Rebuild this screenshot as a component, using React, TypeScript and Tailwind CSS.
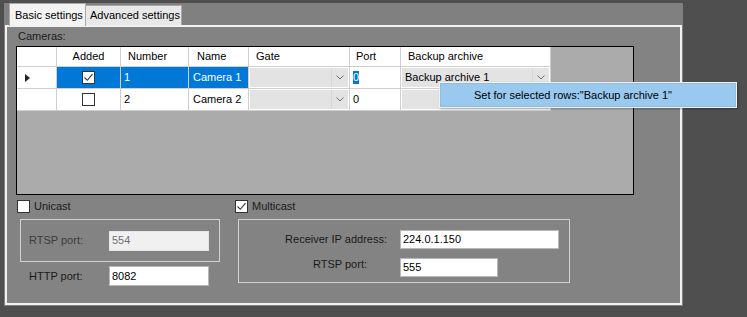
import React from "react";

const font = "font-['Liberation_Sans',Arial,sans-serif]";

function CheckBox({ checked }: { checked?: boolean }) {
    return (
        <div className="w-[13px] h-[13px] bg-white border border-[#333] flex items-center justify-center shrink-0">
            {checked && (
                <svg width="11" height="11" viewBox="0 0 11 11">
                    <path d="M1.5 5.5 L4.3 8.3 L9.5 2.2" stroke="#333" strokeWidth="1.1" fill="none" />
                </svg>
            )}
        </div>
    );
}

function Chevron() {
    return (
        <svg width="8" height="5" viewBox="0 0 8 5">
            <path d="M0.5 0.5 L4 4 L7.5 0.5" stroke="#707070" strokeWidth="1" fill="none" />
        </svg>
    );
}

function Combo({ text }: { text?: string }) {
    return (
        <div className="flex h-full w-full bg-[#e3e3e3]">
            <div className="flex-1 pl-[3px] flex items-center text-black">{text}</div>
            <div className="w-[17px] border-l border-[#d6d6d6] flex items-center justify-center">
                <Chevron />
            </div>
        </div>
    );
}

function TextBox({ value, w, h = 20, disabled }: { value: string; w: number; h?: number; disabled?: boolean }) {
    return (
        <div
            className={
                "border pl-[2px] flex items-center " +
                (disabled ? "bg-[#f0f0f0] text-[#707070] border-[#e6e6e6]" : "bg-white text-black border-[#b8b8b8]")
            }
            style={{ width: w, height: h }}
        >
            {value}
        </div>
    );
}

const cols = [40, 64, 68, 60, 101, 51, 150];
const cell = "border-r border-b border-[#cfcfcf] h-full flex items-center";

export default function App() {
    return (
        <div className={`w-[747px] h-[317px] bg-[#4f4f4f] relative overflow-hidden text-[11px] leading-[13px] ${font}`}>
            <div className="ml-[4px] mt-[3px] w-[679px] h-[303px] bg-[#808080] flex flex-col">
                {/* tabs */}
                <div className="h-[22px] flex items-end pl-[5px] shrink-0">
                    <div className="w-[77px] h-[23px] -mb-[1px] relative z-10 bg-[#f3f3f3] border border-b-0 border-[#a9a9a9] pl-[5px] flex items-center text-black">
                        Basic settings
                    </div>
                    <div className="w-[96px] h-[20px] bg-[#e8e8e8] border border-b-0 border-l-0 border-[#a9a9a9] pl-[4px] flex items-center text-black">
                        Advanced settings
                    </div>
                </div>

                {/* panel */}
                <div className="ml-[1px] w-[677px] h-[280px] border-2 border-[#f2f2f2] bg-[#838383] flex flex-col">
                    <div className="pl-[11px] pt-[3px] text-[#1a1a1a]">Cameras:</div>

                    {/* grid */}
                    <div className="ml-[9px] mt-[3px] w-[618px] h-[149px] border border-black bg-[#ababab] flex flex-col">
                        <div className="flex h-[20px] bg-white w-[534px] text-black">
                            <div className={cell} style={{ width: cols[0] }} />
                            <div className={cell + " justify-center"} style={{ width: cols[1] }}>Added</div>
                            <div className={cell + " pl-[7px]"} style={{ width: cols[2] }}>Number</div>
                            <div className={cell + " pl-[8px]"} style={{ width: cols[3] }}>Name</div>
                            <div className={cell + " pl-[7px]"} style={{ width: cols[4] }}>Gate</div>
                            <div className={cell + " pl-[6px]"} style={{ width: cols[5] }}>Port</div>
                            <div className={cell + " pl-[7px]"} style={{ width: cols[6] }}>Backup archive</div>
                        </div>

                        {/* row 1 */}
                        <div className="flex h-[22px] bg-white w-[534px]">
                            <div className={cell + " pl-[8px]"} style={{ width: cols[0] }}>
                                <svg width="5" height="8" viewBox="0 0 5 8">
                                    <path d="M0 0 L5 4 L0 8 Z" fill="#222" />
                                </svg>
                            </div>
                            <div className={cell + " justify-center bg-[#0078d7]"} style={{ width: cols[1] }}>
                                <CheckBox checked />
                            </div>
                            <div className={cell + " pl-[3px] bg-[#0078d7] text-white"} style={{ width: cols[2] }}>1</div>
                            <div className={cell + " pl-[4px] bg-[#0078d7] text-white"} style={{ width: cols[3] }}>Camera 1</div>
                            <div className={cell + " p-[1px]"} style={{ width: cols[4] }}>
                                <Combo />
                            </div>
                            <div className={cell + " pl-[3px]"} style={{ width: cols[5] }}>
                                <span className="bg-[#0078d7] text-white">0</span>
                            </div>
                            <div className={cell + " p-[1px]"} style={{ width: cols[6] }}>
                                <Combo text="Backup archive 1" />
                            </div>
                        </div>

                        {/* row 2 */}
                        <div className="flex h-[22px] bg-white w-[534px] text-black">
                            <div className={cell} style={{ width: cols[0] }} />
                            <div className={cell + " justify-center"} style={{ width: cols[1] }}>
                                <CheckBox />
                            </div>
                            <div className={cell + " pl-[3px]"} style={{ width: cols[2] }}>2</div>
                            <div className={cell + " pl-[4px]"} style={{ width: cols[3] }}>Camera 2</div>
                            <div className={cell + " p-[1px]"} style={{ width: cols[4] }}>
                                <Combo />
                            </div>
                            <div className={cell + " pl-[3px]"} style={{ width: cols[5] }}>0</div>
                            <div className={cell + " p-[1px]"} style={{ width: cols[6] }}>
                                <Combo />
                            </div>
                        </div>
                    </div>

                    {/* bottom settings */}
                    <div className="flex mt-[5px] ml-[10px] text-[#1a1a1a]">
                        <div className="w-[218px] flex flex-col">
                            <div className="flex items-center h-[13px]">
                                <CheckBox />
                                <span className="ml-[4px]">Unicast</span>
                            </div>
                            <div className="mt-[6px] ml-[3px] w-[200px] h-[43px] border border-[#d2d2d2] flex items-center pl-[8px]">
                                <span className="w-[80px] text-[#3c3c3c]">RTSP port:</span>
                                <TextBox value="554" w={100} disabled />
                            </div>
                            <div className="mt-[4px] ml-[12px] flex items-center h-[20px]">
                                <span className="w-[80px]">HTTP port:</span>
                                <TextBox value="8082" w={100} />
                            </div>
                        </div>

                        <div className="flex flex-col">
                            <div className="flex items-center h-[13px]">
                                <CheckBox checked />
                                <span className="ml-[4px]">Multicast</span>
                            </div>
                            <div className="mt-[6px] ml-[3px] w-[332px] h-[64px] border border-[#d2d2d2] flex flex-col pt-[10px]">
                                <div className="flex items-center">
                                    <span className="w-[148px] text-right">Receiver IP address:</span>
                                    <div className="ml-[13px]">
                                        <TextBox value="224.0.1.150" w={159} h={19} />
                                    </div>
                                </div>
                                <div className="flex items-start mt-[9px]">
                                    <span className="ml-[74px] w-[54px] whitespace-nowrap">RTSP port:</span>
                                    <div className="ml-[33px]">
                                        <TextBox value="555" w={98} h={19} />
                                    </div>
                                </div>
                            </div>
                        </div>
                    </div>
                </div>
            </div>

            {/* context menu */}
            <div className="absolute left-[439px] top-[82px] w-[298px] h-[26px] bg-[#f2f2f2] p-[1px] shadow-[1px_1px_2px_rgba(0,0,0,0.3)]">
                <div className="w-full h-full bg-[#99c9ef] border border-[#8fbde0] flex items-center pl-[33px] text-black">
                    Set for selected rows:"Backup archive 1"
                </div>
            </div>
        </div>
    );
}
